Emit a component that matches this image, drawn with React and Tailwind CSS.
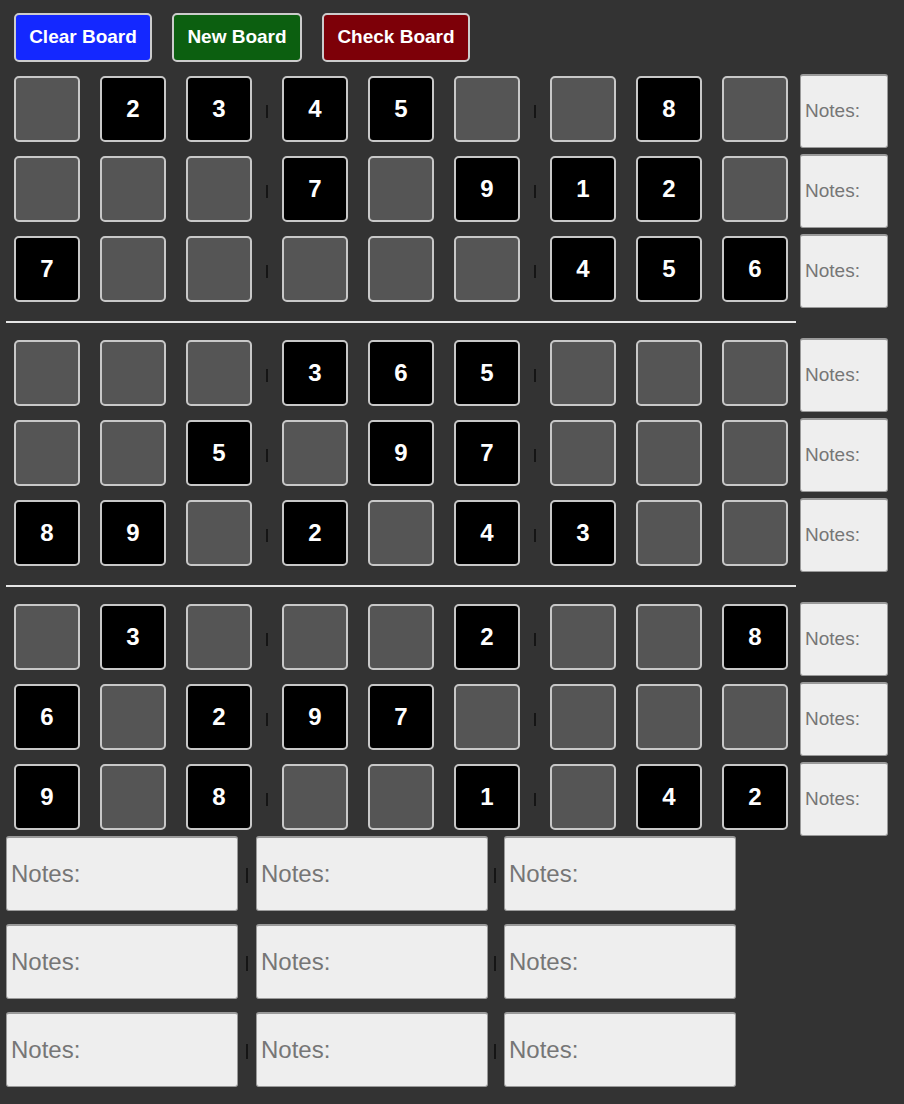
const board = [
  [0, 2, 3, 4, 5, 0, 0, 8, 0],
  [0, 0, 0, 7, 0, 9, 1, 2, 0],
  [7, 0, 0, 0, 0, 0, 4, 5, 6],
  [0, 0, 0, 3, 6, 5, 0, 0, 0],
  [0, 0, 5, 0, 9, 7, 0, 0, 0],
  [8, 9, 0, 2, 0, 4, 3, 0, 0],
  [0, 3, 0, 0, 0, 2, 0, 0, 8],
  [6, 0, 2, 9, 7, 0, 0, 0, 0],
  [9, 0, 8, 0, 0, 1, 0, 4, 2],
];

const Pipe = ({ className = "" }) => (
  <div className={`w-[2px] bg-[#151515] shrink-0 ${className}`} />
);

const Cell = ({ value }) => (
  <div
    className={`w-[66px] h-[66px] shrink-0 rounded-[5px] border-2 border-[#c8c8c8] flex items-center justify-center text-white font-bold text-[24px] ${
      value ? "bg-black" : "bg-[#555555]"
    }`}
  >
    {value || ""}
  </div>
);

const Notes = ({ className = "" }) => (
  <div
    className={`bg-[#eeeeee] rounded-[3px] border border-t-2 border-[#9a9a9a] flex items-center pl-[4px] text-[#767676] shrink-0 ${className}`}
  >
    Notes:
  </div>
);

const Row = ({ values }) => (
  <div className="flex items-center h-[66px] pl-[8px]">
    {values.map((v, i) => (
      <div key={i} className="flex items-center">
        {i > 0 && i % 3 !== 0 && <div className="w-[20px]" />}
        {i > 0 && i % 3 === 0 && (
          <>
            <div className="w-[14px]" />
            <Pipe className="h-[13px] mt-[5px]" />
            <div className="w-[14px]" />
          </>
        )}
        <Cell value={v} />
      </div>
    ))}
    <Notes className="ml-[12px] mt-[4px] w-[88px] h-[74px] text-[19px]" />
  </div>
);

const Block = ({ rows }) => (
  <div className="flex flex-col gap-[14px]">
    {rows.map((r, i) => (
      <Row key={i} values={r} />
    ))}
  </div>
);

const Separator = () => (
  <div className="w-[790px] h-[2px] bg-[#e6e6e6] mt-[19px] mb-[17px]" />
);

export default function App() {
  return (
    <div className="min-h-screen bg-[#333333] px-[6px] pt-[13px] pb-[17px] font-['Liberation_Sans',Arial,sans-serif]">
      <div className="flex gap-[20px] pl-[8px]">
        <button className="h-[49px] w-[138px] rounded-[5px] border-2 border-[#cccccc] bg-[#1428ff] text-white font-bold text-[19px]">
          Clear Board
        </button>
        <button className="h-[49px] w-[130px] rounded-[5px] border-2 border-[#cccccc] bg-[#0c5f10] text-white font-bold text-[19px]">
          New Board
        </button>
        <button className="h-[49px] w-[148px] rounded-[5px] border-2 border-[#cccccc] bg-[#7d0008] text-white font-bold text-[19px]">
          Check Board
        </button>
      </div>

      <div className="mt-[14px]">
        <Block rows={board.slice(0, 3)} />
        <Separator />
        <Block rows={board.slice(3, 6)} />
        <Separator />
        <Block rows={board.slice(6, 9)} />
      </div>

      <div className="mt-[6px] flex flex-col gap-[13px]">
        {[0, 1, 2].map((r) => (
          <div key={r} className="flex items-center">
            <Notes className="w-[232px] h-[75px] text-[24px]" />
            <div className="w-[8px]" />
            <Pipe className="h-[15px] mt-[3px]" />
            <div className="w-[8px]" />
            <Notes className="w-[232px] h-[75px] text-[24px]" />
            <div className="w-[6px]" />
            <Pipe className="h-[15px] mt-[3px]" />
            <div className="w-[8px]" />
            <Notes className="w-[232px] h-[75px] text-[24px]" />
          </div>
        ))}
      </div>
    </div>
  );
}
